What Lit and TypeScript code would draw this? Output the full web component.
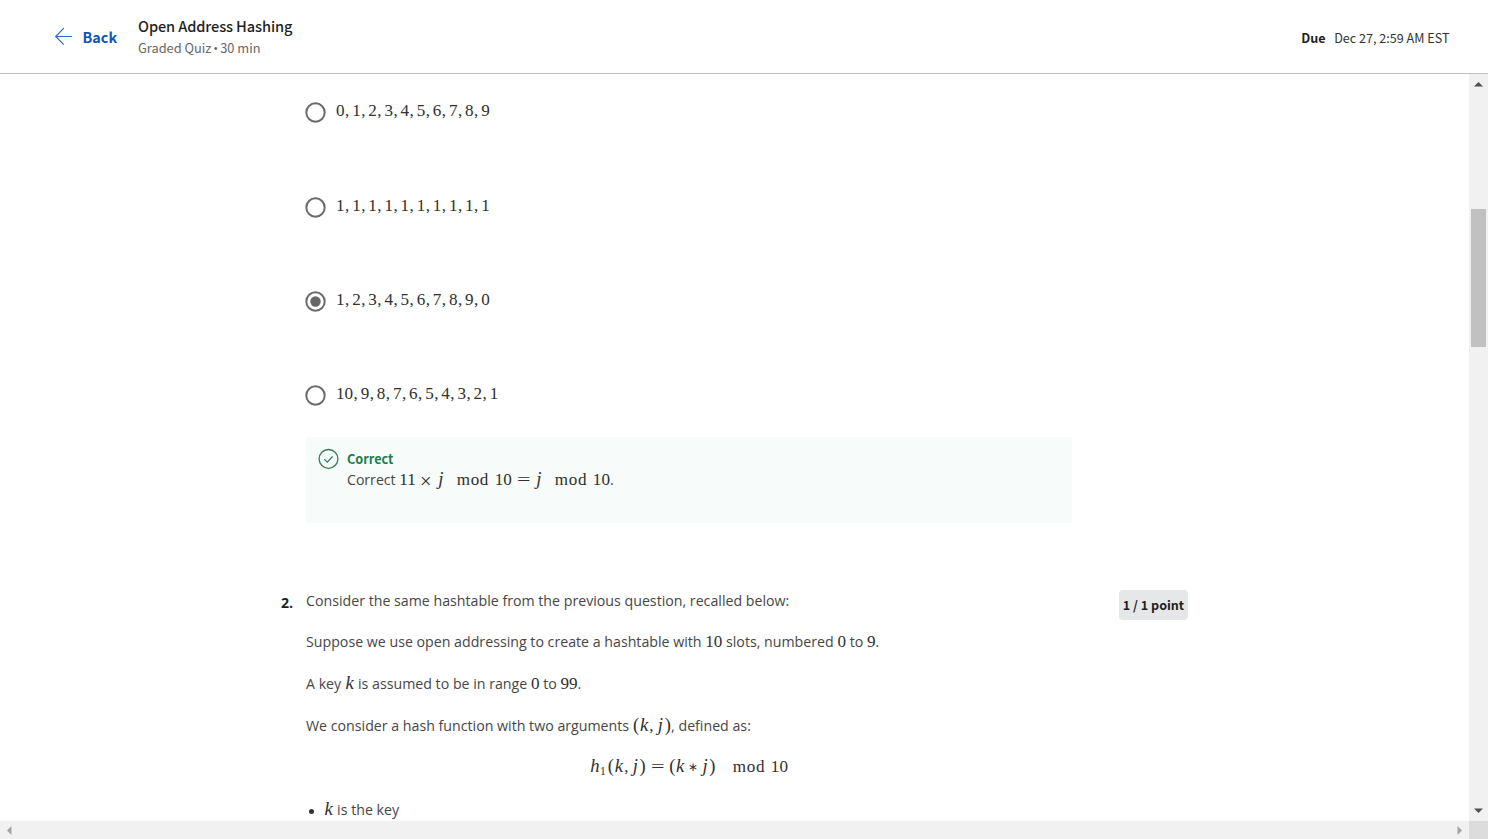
import { LitElement, html, css } from "lit";
import { customElement, property } from "lit/decorators.js";

const KINDS: Record<string, string> = {
  "=": "rel", "×": "bin", "∗": "ast", ",": "punct", "(": "paren", ")": "paren",
  mod: "mod", h: "it h", k: "it k", j: "it j", "₁": "sub",
};

@customElement("math-text")
class MathText extends LitElement {
  @property() tex = "";
  @property({ type: Boolean, reflect: true }) display = false;
  static styles = css`
    :host { display: inline-flex; align-items: baseline; justify-content: center; font-family: "Liberation Serif", serif; font-size: 17.1px; line-height: 18px; color: #303030; white-space: pre; }
    span { flex: none; box-sizing: border-box; }
    b { font-weight: 400; }
    .it { font-style: italic; text-align: center; }
    .it b { font-size: 1.09em; }
    .h { width: .576em; }
    .k { width: .552em; }
    .j { width: .469em; }
    .paren { width: .389em; text-align: center; }
    .paren b { font-size: 1.08em; }
    .punct { width: .444em; padding-left: .03em; }
    .rel, .bin { text-align: center; width: 1.345em; }
    .bin { width: 1.235em; }
    .rel b, .bin b { display: inline-block; transform: scaleX(1.4); }
    .bin b { transform: translateY(1.5px) scale(1.2); }
    .ast { width: .944em; text-align: center; }
    .ast b { display: inline-block; transform: scale(.72); margin: 0 -4px; }
    .mod { width: 1.889em; margin: 0 .333em 0 .7em; letter-spacing: .035em; }
    :host([display]) .mod { margin-left: 1em; }
    .sub { width: .45em; }
    .sub b { display: inline-block; font-size: .68em; transform: translateY(3px); }
  `;
  render() {
    return this.tex.split(" ").map((t) => html`<span class=${KINDS[t] ?? "ord"}><b>${t === "₁" ? "1" : t}</b></span>`);
  }
}

@customElement("quiz-option")
class QuizOption extends LitElement {
  @property({ type: Array }) values: number[] = [];
  @property({ type: Boolean }) checked = false;
  static styles = css`
    :host { display: flex; height: 94.33px; align-items: flex-start; }
    svg { width: 21px; height: 21px; flex: none; margin: 0 10px 0 -1px; }
  `;
  render() {
    return html`
      <svg viewBox="0 0 21 21">
        <circle cx="10.5" cy="10.5" r="9.2" fill="#fff" stroke="#6b6b6b" stroke-width="2"></circle>
        <circle cx="10.5" cy="10.5" r=${this.checked ? 5.2 : 0} fill="#666"></circle>
      </svg>
      <math-text tex=${this.values.join(" , ")}></math-text>
    `;
  }
}

@customElement("app-root")
class AppRoot extends LitElement {
  static styles = css`
    :host { display: flex; flex-direction: column; width: 1488px; height: 839px; overflow: hidden; background: #fff; color: #1f1f1f; font-family: "Noto Sans CJK SC", sans-serif; }
    * { box-sizing: border-box; }
    header { height: 74px; flex: none; border-bottom: 1px solid #c1c1c1; display: flex; padding: 0 38.5px 0 54px; white-space: nowrap; }
    .back { display: flex; align-items: center; gap: 9.5px; width: 84px; color: #0f56b8; font-weight: 700; font-size: 14.4px; line-height: 20px; }
    .back svg { width: 19px; height: 19px; }
    .titles { flex: 1; padding-top: 16px; }
    .title { font-size: 14.6px; font-weight: 500; line-height: 20px; height: 21px; letter-spacing: -.12px; }
    .sub { font-size: 12.8px; line-height: 22px; color: #666; }
    .sub i { font: 13px "Open Sans", sans-serif; margin: 0 2px; }
    .due { display: flex; align-items: center; gap: 8.5px; font-size: 12.6px; color: #333; padding-top: 1px; }
    .due b { color: #1f1f1f; }
    .body { flex: 1; min-height: 0; display: grid; grid-template-columns: 1469px 19px; grid-template-rows: 747px 18px; }
    main { overflow: hidden; padding: 28.2px 0 0 306px; font-family: "Open Sans", sans-serif; font-size: 14.2px; color: #464646; }
    .options { height: 334.8px; }
    .feedback { width: 766px; height: 86px; background: #f7fbf9; display: flex; padding: 11px 0 0 12px; gap: 8px; }
    .feedback svg { width: 21px; height: 21px; flex: none; }
    .ok { font-family: "Noto Sans CJK SC", sans-serif; font-weight: 700; color: #1d7c50; font-size: 12.7px; line-height: 21px; height: 22px; }
    .line { display: flex; align-items: baseline; white-space: pre; line-height: 20px; height: 20px; }
    .feedback .line { font-size: 14.1px; }
    .question { display: grid; grid-template-columns: 26px 766px 116px; margin: 67px 0 0 -26px; }
    .number { font-weight: 700; color: #1f1f1f; line-height: 24px; padding: 1px 0 0 1px; }
    .prompt { padding-top: .6px; }
    .prompt .line { height: 41.72px; }
    .prompt .formula { justify-content: center; }
    .prompt .item { align-items: baseline; padding-top: 1.3px; }
    .dot { width: 5px; height: 5px; border-radius: 50%; background: #333; margin: 0 10px 4px 3px; align-self: flex-start; margin-top: 8.5px; }
    .points { justify-self: end; width: 69px; height: 30px; border-radius: 4px; background: #e5e7e8; color: #1f1f1f; font: 700 12.55px/30px "Noto Sans CJK SC", sans-serif; text-align: center; white-space: nowrap; }
    .vbar { background: #f1f1f1; display: flex; flex-direction: column; align-items: center; padding: 7px 0; }
    .vbar svg { width: 9px; height: 6px; flex: none; }
    .thumb { width: 15px; height: 138px; margin: 122px 0 auto; background: #c1c1c1; }
    .hbar { background: #f1f1f1; display: flex; align-items: center; justify-content: space-between; padding: 0 6px; }
    .hbar svg { width: 6px; height: 9px; }
    .corner { background: #dcdcdc; }
  `;
  render() {
    return html`
      <header>
        <div class="back">
          <svg viewBox="0 0 19 19" fill="none" stroke="#2a6ac0" stroke-width="1.2"><path d="M18 9.5H2M9.8 1.2L1.7 9.5l8.1 8.1"></path></svg>
          <span>Back</span>
        </div>
        <div class="titles"><div class="title">Open Address Hashing</div><div class="sub">Graded Quiz<i>•</i>30 min</div></div>
        <div class="due"><b>Due</b><span>Dec 27, 2:59 AM EST</span></div>
      </header>
      <div class="body">
        <main>
          <div class="options">
            <quiz-option .values=${[0, 1, 2, 3, 4, 5, 6, 7, 8, 9]}></quiz-option>
            <quiz-option .values=${[1, 1, 1, 1, 1, 1, 1, 1, 1, 1]}></quiz-option>
            <quiz-option checked .values=${[1, 2, 3, 4, 5, 6, 7, 8, 9, 0]}></quiz-option>
            <quiz-option .values=${[10, 9, 8, 7, 6, 5, 4, 3, 2, 1]}></quiz-option>
          </div>
          <div class="feedback">
            <svg viewBox="0 0 21 21" fill="none" stroke="#2b8259"><circle cx="10.5" cy="10.9" r="9.4" stroke-width="1.3"></circle><path d="M6.3 11.2l3 2.9 5.3-5.6" stroke-width="1.2"></path></svg>
            <div>
              <div class="ok">Correct</div>
              <div class="line">Correct <math-text tex="11 × j mod 10 = j mod 10"></math-text>.</div>
            </div>
          </div>
          <div class="question">
            <div class="number">2.</div>
            <div class="prompt">
              <div class="line">Consider the same hashtable from the previous question, recalled below:</div>
              <div class="line">Suppose we use open addressing to create a hashtable with <math-text tex="10"></math-text> slots, numbered <math-text tex="0"></math-text> to <math-text tex="9"></math-text>.</div>
              <div class="line">A key <math-text tex="k"></math-text> is assumed to be in range <math-text tex="0"></math-text> to <math-text tex="99"></math-text>.</div>
              <div class="line">We consider a hash function with two arguments <math-text tex="( k , j )"></math-text>, defined as:</div>
              <div class="line formula"><math-text display tex="h ₁ ( k , j ) = ( k ∗ j ) mod 10"></math-text></div>
              <div class="line item"><span class="dot"></span><math-text tex="k"></math-text> is the key</div>
            </div>
            <div class="points">1 / 1 point</div>
          </div>
        </main>
        <div class="vbar">
          <svg viewBox="0 0 9 6"><path d="M0 5.5L4.5 1 9 5.5z" fill="#505050"></path></svg>
          <div class="thumb"></div>
          <svg viewBox="0 0 9 6"><path d="M0 .5L4.5 5 9 .5z" fill="#505050"></path></svg>
        </div>
        <div class="hbar">
          <svg viewBox="0 0 6 9"><path d="M5.5 0L1 4.5 5.5 9z" fill="#a3a3a3"></path></svg>
          <svg viewBox="0 0 6 9"><path d="M.5 0L5 4.5.5 9z" fill="#a3a3a3"></path></svg>
        </div>
        <div class="corner"></div>
      </div>
    `;
  }
}
